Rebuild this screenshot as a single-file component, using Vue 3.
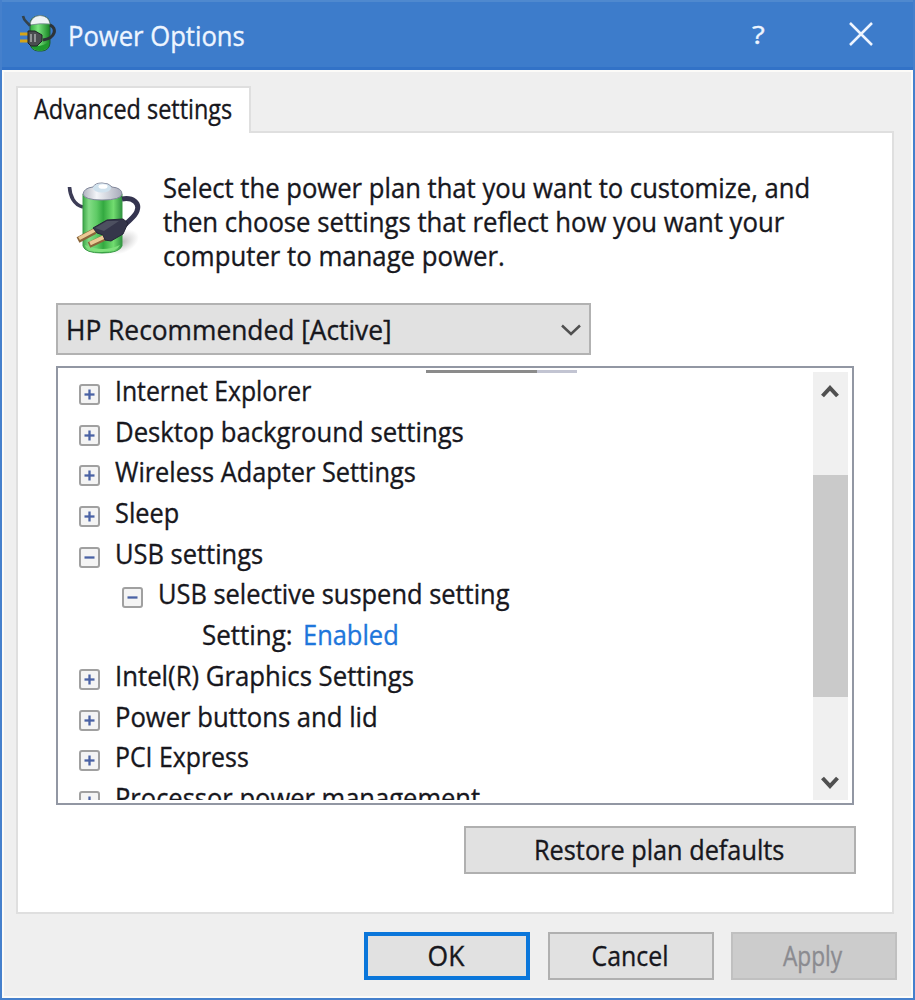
<script setup>
const rows = [
  { text: 'Internet Explorer', w: 196, sign: '+' },
  { text: 'Desktop background settings', w: 349, sign: '+' },
  { text: 'Wireless Adapter Settings', w: 301, sign: '+' },
  { text: 'Sleep', w: 64, sign: '+' },
  { text: 'USB settings', w: 148, sign: '-' },
  { text: 'USB selective suspend setting', w: 351, sign: '-', level: 1 },
  { text: 'Setting:', w: 91, level: 2, value: 'Enabled' },
  { text: 'Intel(R) Graphics Settings', w: 299, sign: '+' },
  { text: 'Power buttons and lid', w: 263, sign: '+' },
  { text: 'PCI Express', w: 134, sign: '+' },
  { text: 'Processor power management', w: 365, sign: '+' },
]

// Condenses a label horizontally to the given width.
const vFit = {
  mounted(el, { value }) {
    el.style.transform = `scaleX(${value / el.offsetWidth})`
  },
}
</script>

<template>
  <div class="window">
    <header class="titlebar">
      <svg class="app-icon" viewBox="0 0 36 40" width="36" height="40">
        <defs>
          <linearGradient id="sg" x1="0" x2="1">
            <stop offset="0" stop-color="#2fa83a" /><stop offset=".4" stop-color="#7be57f" /><stop offset="1" stop-color="#158322" />
          </linearGradient>
        </defs>
        <rect x="10" y="2" width="20" height="35" rx="8" fill="url(#sg)" stroke="#225d3b" stroke-width="1" />
        <path d="M10 11 Q11 2 20 1.500 Q29 2 30 10 Q20 9 10 11Z" fill="#eef3f5" stroke="#71848c" stroke-width=".8" />
        <path d="M3 2 C4 8 8 8 10 12" fill="none" stroke="#34424a" stroke-width="2.600" />
        <path d="M30 11 C37 14 36 24 23 26" fill="none" stroke="#2d3338" stroke-width="3.200" />
        <path d="M11 31 Q20 34 29 28 Q29 36 20 37 Q12 36 11 31Z" fill="#1f9a2e" />
        <path d="M0 20 H9 M0 27 H9" stroke="#d5a416" stroke-width="3" />
        <path d="M8 17 L10 17 L15 17 L22 21 V27 L17 32 H11 L8 29Z" fill="#4a4d50" stroke="#1e2224" />
        <path d="M11 20 V28 M15 20 V28" fill="none" stroke="#999c9d" stroke-width="1.800" />
      </svg>
      <span class="title"><span v-fit="177" class="label">Power Options</span></span>
      <span class="help"><span v-fit="13" class="label">?</span></span>
      <svg class="close" viewBox="0 0 24 24" width="24" height="24"><path d="M1 1 L23 23 M23 1 L1 23" fill="none" stroke="#eef5ff" stroke-width="2.500" /></svg>
    </header>

    <main class="body">
      <div class="tab"><span v-fit="198" class="label">Advanced settings</span></div>
      <section class="panel">
        <div class="intro">
          <svg class="plan-icon" viewBox="0 0 76 78" width="76" height="78">
            <defs>
              <linearGradient id="bg" x1="0" x2="1">
                <stop offset="0" stop-color="#3da849" /><stop offset=".15" stop-color="#83dc85" /><stop offset=".35" stop-color="#5fcb66" /><stop offset=".52" stop-color="#33a940" /><stop offset=".78" stop-color="#72dc70" /><stop offset="1" stop-color="#2f9440" />
              </linearGradient>
              <linearGradient id="cap" x1="0" x2="1">
                <stop offset="0" stop-color="#b0b3bf" /><stop offset=".35" stop-color="#f3f5f8" /><stop offset="1" stop-color="#a7aab9" />
              </linearGradient>
              <radialGradient id="shade"><stop offset="0" stop-color="#777" stop-opacity=".5" /><stop offset="1" stop-color="#999" stop-opacity="0" /></radialGradient>
            </defs>
            <ellipse cx="57" cy="62" rx="18" ry="11" fill="url(#shade)" transform="rotate(-25 57 62)" />
            <path d="M4.500 7 C5 16 9 25 18 27" fill="none" stroke="#3c3c56" stroke-width="3.600" />
            <path d="M18 14 V66 Q20 73 37 73 Q54 73 57 66 V14Z" fill="url(#bg)" stroke="#3a9a46" />
            <path d="M20 65 Q38 73 55 65 Q52 72 37 72 Q22 72 20 65Z" fill="#7fe07c" />
            <path d="M18 14 Q19 8 28 7 Q30 3 37 3 Q44 3 47 7 Q57 8 57 14 Q56 20 37 20 Q19 20 18 14Z" fill="url(#cap)" stroke="#80869a" />
            <ellipse cx="37" cy="8" rx="9" ry="4.500" fill="#d0e2ee" />
            <ellipse cx="38" cy="6.500" rx="4.500" ry="2.300" fill="#fff" />
            <path d="M57 19 C68 17 75 23 72 31 C70 37 64 40 60 45" fill="none" stroke="#34344f" stroke-width="5" />
            <path d="M30 51 L13 60 M41 57 L24 65" stroke="#8b653a" stroke-width="6" />
            <path d="M30 50 L14 58.500 M41 56 L25 63.500" stroke="#ebc994" stroke-width="3.600" />
            <path d="M28 48 L42 40 L58 39 L63 43 L58 54 L46 61 L40 60 L38 55 L32 53Z" fill="#35364a" stroke="#252637" />
            <path d="M30 48 L42 41 L54 41 L39 51Z" fill="#4d5060" />
          </svg>
          <p class="copy">
            <span v-fit="647" class="label">Select the power plan that you want to customize, and</span>
            <span v-fit="621" class="label">then choose settings that reflect how you want your</span>
            <span v-fit="342" class="label">computer to manage power.</span>
          </p>
        </div>

        <div class="combo">
          <span v-fit="326" class="label">HP Recommended [Active]</span>
          <svg viewBox="0 0 20 12" width="20" height="12"><path d="M1 1.500 L10 10 L19 1.500" fill="none" stroke="#505050" stroke-width="2.500" /></svg>
        </div>

        <div class="list">
          <i class="stray"></i>
          <div class="tree">
            <div v-for="row in rows" :key="row.text" class="row" :class="'level-' + (row.level || 0)">
              <svg v-if="row.sign" class="toggle" viewBox="0 0 21 21" width="21" height="21">
                <rect x="1" y="1" width="19" height="19" rx="2" fill="#f4f4f4" stroke="#a0a0a0" stroke-width="2" />
                <path d="M5.500 10.500 H15.500" stroke="#4a62a5" stroke-width="2.300" />
                <path v-if="row.sign === '+'" d="M10.500 5.500 V15.500" stroke="#4a62a5" stroke-width="2.300" />
              </svg>
              <span class="cell" :style="{ width: row.w + 'px' }"><span v-fit="row.w" class="label">{{ row.text }}</span></span>
              <span v-if="row.value" class="value"><span v-fit="96" class="label">{{ row.value }}</span></span>
            </div>
          </div>
          <div class="scrollbar">
            <svg viewBox="0 0 18 14" width="18" height="14"><path d="M1.500 12 L9 4 L16.500 12" fill="none" stroke="#505050" stroke-width="4" /></svg>
            <div class="thumb"></div>
            <svg viewBox="0 0 18 14" width="18" height="14"><path d="M1.500 2 L9 10 L16.500 2" fill="none" stroke="#505050" stroke-width="4" /></svg>
          </div>
        </div>

        <button class="btn restore"><span v-fit="250" class="label">Restore plan defaults</span></button>
      </section>
      <footer class="actions">
        <button class="btn ok"><span v-fit="37" class="label">OK</span></button>
        <button class="btn"><span v-fit="77" class="label">Cancel</span></button>
        <button class="btn disabled"><span v-fit="59" class="label">Apply</span></button>
      </footer>
    </main>
  </div>
</template>

<style>
body { margin: 0; }
</style>

<style scoped>
.window {
  box-sizing: border-box;
  width: 915px;
  height: 1000px;
  border: 2px solid #4580cc;
  border-top-width: 0;
  display: flex;
  flex-direction: column;
  font: 26.5px/34px "Open Sans", "Noto Sans", sans-serif;
  color: #17171d;
  overflow: hidden;
}
.label {
  display: inline-block;
  white-space: pre;
  transform-origin: 0 50%;
  -webkit-text-stroke: 0.35px currentColor;
}
.titlebar {
  box-sizing: border-box;
  flex: none;
  height: 70px;
  margin: 0 -2px;
  display: flex;
  align-items: center;
  background: #3d7ccb;
  border-top: 2px solid #4f89cf;
  border-bottom: 3px solid #3272c7;
  color: #eef5ff;
}
.app-icon { margin: -1px 0 0 20px; }
.title { width: 682px; margin: 2px 0 0 12px; }
.help { width: 14px; margin: -2px 0 0 2px; }
.help .label { font-size: 25px; }
.close { margin: -1px 0 0 83px; }
.body {
  flex: 1;
  box-sizing: border-box;
  border: 2px solid #fcfbf8;
  background: #efefef;
  padding: 14px 17px 0 12px;
}
.tab {
  position: relative;
  box-sizing: border-box;
  width: 235px;
  height: 47px;
  border: 2px solid #dfdfdf;
  border-bottom: 0;
  background: #fff;
  padding: 4px 0 0 16px;
}
.panel {
  box-sizing: border-box;
  height: 783px;
  margin-top: -2px;
  border: 2px solid #dfdfdf;
  background: #fff;
  padding: 38px 34px 0 38px;
}
.intro { display: flex; height: 132px; }
.plan-icon { margin: 9px 0 0 9px; }
.copy { display: flex; flex-direction: column; align-items: flex-start; margin: 0 0 0 22px; }
.combo {
  box-sizing: border-box;
  width: 535px;
  height: 52px;
  border: 2px solid #b2b2b2;
  background: #e1e1e1;
  display: flex;
  align-items: center;
  justify-content: space-between;
  padding: 1px 8px 0 8px;
}
.list {
  position: relative;
  box-sizing: border-box;
  width: 798px;
  height: 439px;
  margin-top: 11px;
  border: 2px solid #9297a3;
  display: flex;
  justify-content: space-between;
  padding: 4px 4px 3px 0;
}
.stray {
  position: absolute;
  left: 368px;
  top: 2px;
  width: 151px;
  height: 3px;
  background: linear-gradient(90deg, #8b8b8b 111px, #c2c4d2 111px);
}
.tree { flex: 1; overflow: hidden; padding-top: 2px; }
.row { height: 40.7px; display: flex; align-items: flex-start; padding-left: 21px; }
.level-1 { padding-left: 64px; }
.level-2 { padding-left: 144px; }
.toggle { flex: none; margin: 10px 15px 0 0; }
.cell { flex: none; }
.value { margin-left: 10px; color: #1e76db; }
.scrollbar {
  width: 35px;
  background: #f0f0f0;
  display: flex;
  flex-direction: column;
  align-items: center;
}
.scrollbar svg { margin: 12px 1px 0 0; }
.thumb { width: 35px; height: 222px; margin: 77px 0 67px; background: #cacaca; flex: none; }
.btn {
  box-sizing: border-box;
  width: 166px;
  height: 48px;
  border: 2px solid #b0b0b0;
  background: #e1e1e1;
  font: inherit;
  color: inherit;
  padding: 0 2px 0 0;
  display: flex;
  align-items: center;
  justify-content: center;
}
.btn .label { transform-origin: 50% 50%; }
.restore { width: 392px; margin: 21px 0 0 408px; }
.actions { display: flex; justify-content: flex-end; gap: 17.5px; margin: 18px -3px 0 0; }
.ok { border: 4px solid #0a76da; }
.disabled { background: #cccccc; border-color: #c0c0c0; color: #8b8b90; }
</style>
